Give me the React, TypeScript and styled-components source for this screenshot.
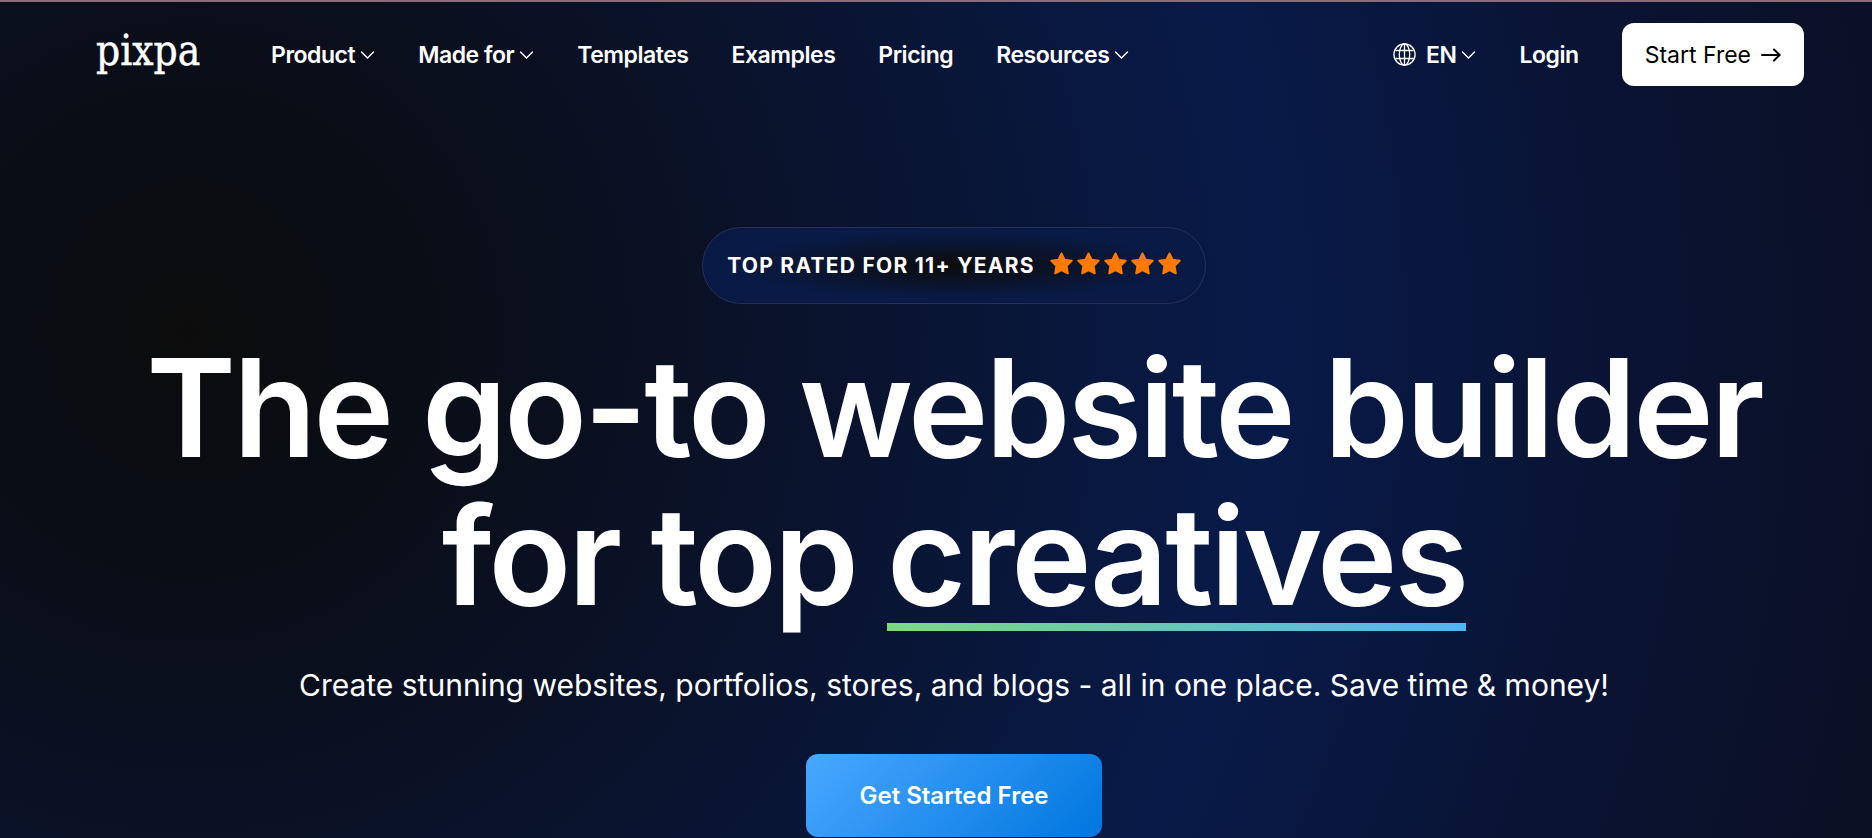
import React from "react";
import styled, { createGlobalStyle } from "styled-components";

const GlobalStyle = createGlobalStyle`
  *, *::before, *::after { box-sizing: border-box; }
  html, body { margin: 0; background: #0a1128; }
  body {
    font-family: Inter, "Liberation Sans", sans-serif;
    color: #fff;
    overflow-x: hidden;
  }
`;

const Page = styled.div`
  min-height: 100vh;
  border-top: 2px solid #8a6c7a;
  background: radial-gradient(circle at 190px 330px, #0c0c0c 0, #0a0d14 190px, #0a1124 480px, #081a48 1080px, #0a1230 1500px, #0a1124 1750px);
`;

const Header = styled.header`
  display: flex;
  align-items: center;
  justify-content: space-between;
  padding: 21px 68px 0 96px;
`;

const Group = styled.div`
  display: flex;
  align-items: center;
`;

const Logo = styled.a`
  width: 105px;
  margin-right: 70px;
  padding-bottom: 8px;
  color: #fff;
  font-family: "DejaVu Serif Condensed", "DejaVu Serif", serif;
  font-size: 42px;
  line-height: 48px;
  -webkit-text-stroke: 0.01em #fff;
  text-decoration: none;
`;

const Nav = styled.nav`
  display: flex;
  align-items: center;
  gap: 43px;
`;

const navText = `
  display: flex;
  align-items: center;
  gap: 5px;
  padding: 0;
  border: 0;
  background: none;
  color: #fff;
  font-family: inherit;
  font-size: 23px;
  font-weight: 600;
  line-height: 32px;
  letter-spacing: -0.02em;
  text-decoration: none;
  white-space: nowrap;
  cursor: pointer;
`;

const NavLink = styled.a`${navText}`;
const NavButton = styled.button`${navText}`;

const LanguageLabel = styled.span`
  margin-left: 5px;
`;

const Actions = styled(Group)`
  gap: 43px;
`;

const StartLink = styled.a`
  display: flex;
  align-items: center;
  gap: 10px;
  height: 63px;
  padding: 0 23px;
  border-radius: 12px;
  background: #fff;
  color: #000;
  font-size: 23px;
  line-height: 32px;
  white-space: nowrap;
  text-decoration: none;
`;

const Hero = styled.main`
  display: flex;
  flex-direction: column;
  align-items: center;
  padding: 141px 40px 1px 76px;
  text-align: center;
`;

const Rating = styled.div`
  display: flex;
  align-items: center;
  gap: 15px;
  height: 77px;
  padding: 0 24px;
  border: 1px solid #22305a;
  border-radius: 39px;
  background: radial-gradient(ellipse at center, #0c0c0c 0, #081a45 62%, #0a1a45 100%);
  font-size: 21px;
  font-weight: 700;
  line-height: 28px;
  letter-spacing: 0.06em;
  white-space: nowrap;
`;

const Stars = styled.span`
  display: flex;
  gap: 4px;
  padding-bottom: 5px;
`;

const Title = styled.h1`
  margin: 30px 0 0;
  font-size: 136px;
  font-weight: 600;
  line-height: 148px;
  letter-spacing: -3px;
`;

const Accent = styled.span`
  background: linear-gradient(90deg, #7dd87d, #50b5f5) 0 calc(100% - 7px) / 100% 8px no-repeat;
`;

const Subtitle = styled.p`
  margin: 33px 0 0;
  font-size: 30px;
  line-height: 44px;
`;

const GetStarted = styled.button`
  height: 83px;
  margin-top: 47px;
  padding: 0 53px;
  border: 0;
  border-radius: 12px;
  background: linear-gradient(135deg, #49a8ff, #0076df);
  color: #fff;
  font-family: inherit;
  font-size: 24px;
  font-weight: 600;
  cursor: pointer;
`;

const Chevron = () => (
  <svg width="15" height="10" viewBox="0 0 15 10" fill="none" stroke="currentColor" strokeWidth="1.4" strokeLinecap="round" aria-hidden="true">
    <path d="M1.5 2 7.5 8 13.5 2" />
  </svg>
);

const Globe = () => (
  <svg width="23" height="23" viewBox="0 0 23 23" fill="none" stroke="currentColor" strokeWidth="1.3" aria-hidden="true">
    <circle cx="11.5" cy="11.5" r="10.6" />
    <ellipse cx="11.5" cy="11.5" rx="5.2" ry="10.6" />
    <path d="M11.5 1V22M2.3 7.5H20.7M2.3 15.5H20.7" />
  </svg>
);

const Arrow = () => (
  <svg width="20" height="14" viewBox="0 0 20 14" fill="none" stroke="currentColor" strokeWidth="2" strokeLinecap="round" strokeLinejoin="round" aria-hidden="true">
    <path d="M1 7H18.5M13 1.5 18.7 7 13 12.5" />
  </svg>
);

const Star = () => (
  <svg width="23" height="23" viewBox="0 0 23 23" fill="#ff7a00" stroke="#ff7a00" strokeWidth="2" strokeLinejoin="round" aria-hidden="true">
    <path d="M11.5 1.5 14.6 7.7 21.7 8.7 16.6 13.7 17.8 21.3 11.5 18 5.2 21.3 6.4 13.7 1.3 8.7 8.4 7.7Z" />
  </svg>
);

const navItems = [
  { label: "Product", menu: true },
  { label: "Made for", menu: true },
  { label: "Templates", menu: false },
  { label: "Examples", menu: false },
  { label: "Pricing", menu: false },
  { label: "Resources", menu: true },
];

export default function App() {
  return (
    <>
      <GlobalStyle />
      <Page>
        <Header>
          <Group>
            <Logo href="#">pixpa</Logo>
            <Nav aria-label="Main">
              {navItems.map(({ label, menu }) =>
                menu ? (
                  <NavButton key={label} type="button" aria-haspopup="true">
                    {label}
                    <Chevron />
                  </NavButton>
                ) : (
                  <NavLink key={label} href="#">{label}</NavLink>
                )
              )}
            </Nav>
          </Group>
          <Actions>
            <NavButton type="button" aria-haspopup="true">
              <Globe />
              <LanguageLabel>EN</LanguageLabel>
              <Chevron />
            </NavButton>
            <NavLink href="#">Login</NavLink>
            <StartLink href="#">
              Start Free
              <Arrow />
            </StartLink>
          </Actions>
        </Header>
        <Hero>
          <Rating>
            TOP RATED FOR 11+ YEARS
            <Stars role="img" aria-label="5 stars">
              {[1, 2, 3, 4, 5].map((n) => <Star key={n} />)}
            </Stars>
          </Rating>
          <Title>
            The go-to website builder
            <br />
            for top <Accent>creatives</Accent>
          </Title>
          <Subtitle>
            Create stunning websites, portfolios, stores, and blogs - all in one place. Save time &amp; money!
          </Subtitle>
          <GetStarted type="button">Get Started Free</GetStarted>
        </Hero>
      </Page>
    </>
  );
}
